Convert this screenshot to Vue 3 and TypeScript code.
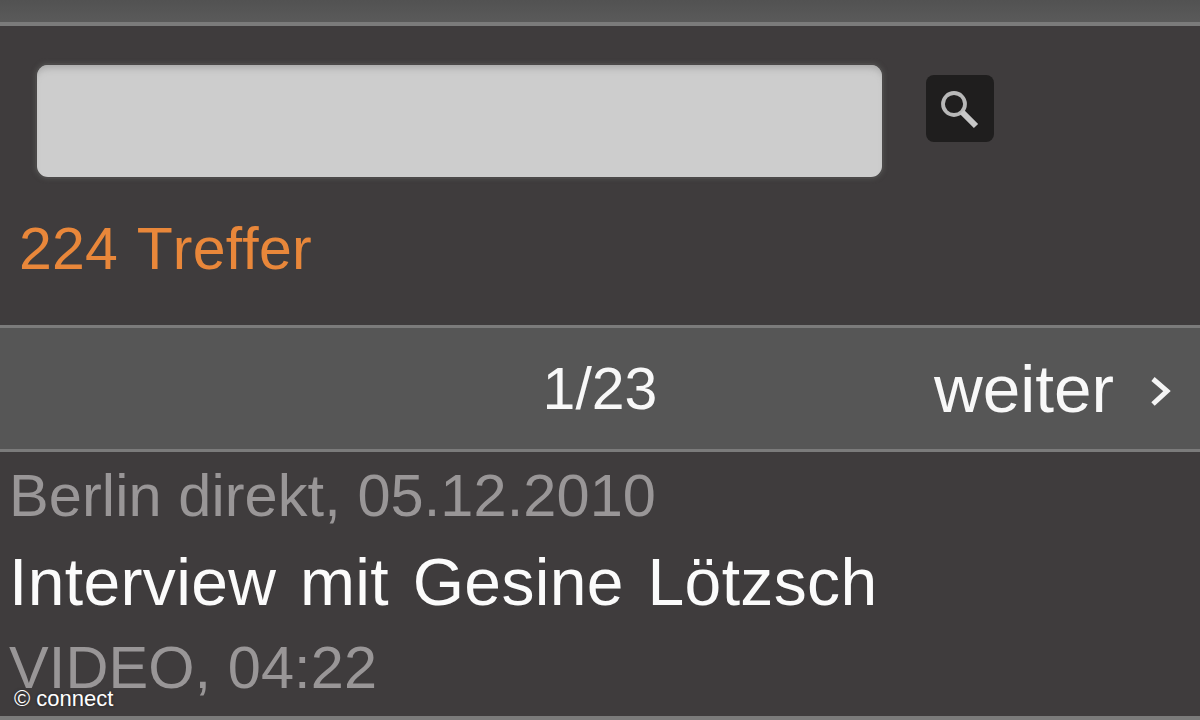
<script setup lang="ts">
const title = 'Interview mit Gesine Lötzsch'
</script>

<template>
  <div class="page">
    <div class="topbar"></div>
    <section class="search">
      <div class="search-row">
        <div class="input"></div>
        <button class="btn" aria-label="Suche">
          <svg class="lens" width="68" height="67" viewBox="0 0 68 67" fill="none">
            <circle cx="28" cy="29" r="11" stroke="#b8b8b8" stroke-width="3.8" />
            <path d="M36 37 L50 51" stroke="#c8c8c8" stroke-width="6" />
          </svg>
        </button>
      </div>
      <div class="hits">224 Treffer</div>
    </section>
    <nav class="pager">
      <span class="count">1/23</span>
      <span class="next">weiter</span>
      <svg class="chev" width="24" height="34" viewBox="0 0 24 34" fill="none">
        <path d="M3 4 L17 16 L3 29" stroke="#f4f4f4" stroke-width="5" />
      </svg>
    </nav>
    <article class="result">
      <div class="meta first">Berlin direkt, 05.12.2010</div>
      <div class="title">{{ title }}</div>
      <div class="meta">VIDEO, 04:22</div>
    </article>
    <div class="endline"></div>
    <div class="credit">© connect</div>
  </div>
</template>

<style>
body { margin: 0; background: #3f3c3d; }
</style>

<style scoped>
.page {
  position: relative;
  width: 1200px;
  height: 720px;
  overflow: hidden;
  background: #3f3c3d;
  font-family: "Liberation Sans", Arial, sans-serif;
  font-kerning: none;
  display: flex;
  flex-direction: column;
}
.topbar {
  height: 22px;
  background: linear-gradient(#525252, #5a5a5a);
  border-bottom: 4px solid #7b7b7b;
  flex: none;
}
.search {
  height: 299px;
  flex: none;
  box-sizing: border-box;
  padding: 39px 0 0 19px;
}
.search-row {
  display: flex;
  align-items: flex-start;
  padding-left: 18px;
}
.input {
  width: 845px;
  height: 112px;
  box-sizing: border-box;
  background: #cdcdcd;
  border-radius: 11px;
  box-shadow: inset 0 7px 7px -4px #a8a8a8, 0 0 0 2px #4b4949, 0 0 3px 4px #464444;
}
.btn {
  width: 68px;
  height: 67px;
  margin: 10px 0 0 44px;
  padding: 0;
  border: 0;
  border-radius: 8px;
  background: #1f1e1e;
  display: flex;
  align-items: center;
  justify-content: center;
}
.lens { filter: blur(0.5px); }
.hits {
  margin-top: 36px;
  font-size: 59px;
  line-height: 72px;
  color: #e9873a;
  letter-spacing: 0.2px;
  word-spacing: 2px;
}
.pager {
  position: relative;
  height: 121px;
  flex: none;
  border-top: 3px solid #7b7b7b;
  border-bottom: 3px solid #7b7b7b;
  background: #565656;
  display: flex;
  align-items: center;
  color: #f8f8f8;
  font-size: 59px;
}
.count {
  width: 100%;
  text-align: center;
}
.next {
  position: absolute;
  left: 934px;
  top: 25px;
  font-size: 67.5px;
  line-height: 72px;
}
.chev {
  position: absolute;
  left: 1150px;
  top: 47px;
}
.result {
  flex: 1;
  padding-left: 9px;
  font-size: 59.5px;
  line-height: 86px;
}
.meta { color: #999697; letter-spacing: 0.08px; }
.first { margin-top: 1px; }
.title {
  color: #fbfbfb;
  font-size: 66px;
  letter-spacing: 0.35px;
  word-spacing: 5px;
}
.endline {
  height: 4px;
  flex: none;
  background: #7b7b7b;
}
.credit {
  position: absolute;
  left: 14px;
  top: 686px;
  color: #fff;
  font-size: 22px;
  line-height: 26px;
  text-shadow: 0 0 3px #222;
}
</style>
